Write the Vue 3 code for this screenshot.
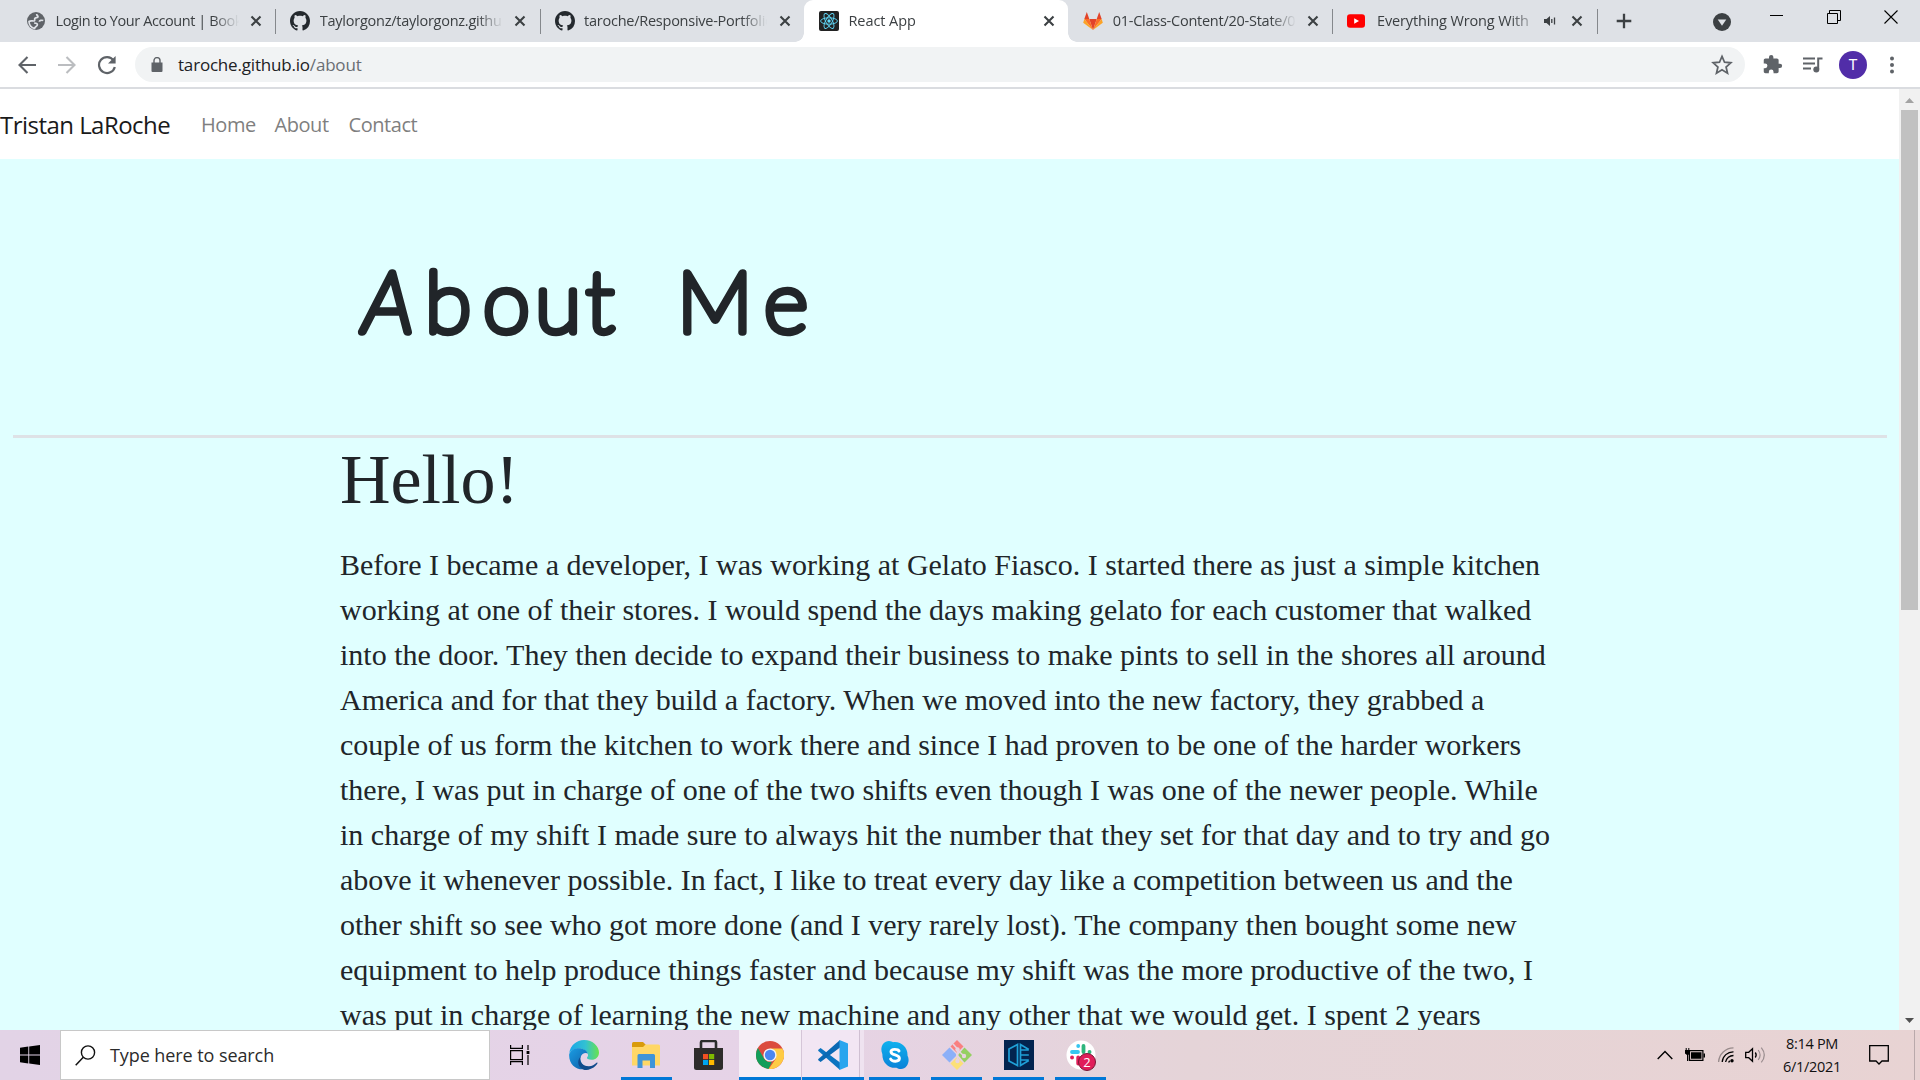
<script setup>
const tabs = [
  { icon: 'globe', title: 'Login to Your Account | Book', sp: '-0.42px' },
  { icon: 'github', title: 'Taylorgonz/taylorgonz.github', sp: '-0.25px' },
  { icon: 'github', title: 'taroche/Responsive-Portfolio', sp: '-0.25px' },
  { icon: 'react', title: 'React App', active: true, sp: '-0.05px' },
  { icon: 'gitlab', title: '01-Class-Content/20-State/0', sp: '-0.25px' },
  { icon: 'youtube', title: 'Everything Wrong With', sound: true, sp: '-0.13px' },
]
const lines = [
  'Before I became a developer, I was working at Gelato Fiasco. I started there as just a simple kitchen',
  'working at one of their stores. I would spend the days making gelato for each customer that walked',
  'into the door. They then decide to expand their business to make pints to sell in the shores all around',
  'America and for that they build a factory. When we moved into the new factory, they grabbed a',
  'couple of us form the kitchen to work there and since I had proven to be one of the harder workers',
  'there, I was put in charge of one of the two shifts even though I was one of the newer people. While',
  'in charge of my shift I made sure to always hit the number that they set for that day and to try and go',
  'above it whenever possible. In fact, I like to treat every day like a competition between us and the',
  'other shift so see who got more done (and I very rarely lost). The company then bought some new',
  'equipment to help produce things faster and because my shift was the more productive of the two, I',
  'was put in charge of learning the new machine and any other that we would get. I spent 2 years',
]
</script>

<template>
  <div class="screen">
    <header class="tabstrip">
      <div v-for="(t, i) in tabs" :key="i" class="tab" :class="{ active: t.active, sep: !t.active && i !== 2 }">
        <svg v-if="t.icon === 'globe'" class="fav" viewBox="0 0 20 20"><circle cx="10" cy="10" r="9" fill="#5f6368" /><path d="M10.700 3c-.2 1.500 1.300 1.600 1.300 2.700 0 1.300-2.500.6-3.200 1.800-.5 1 .4 1.500-.4 2.300C7.500 10.600 5 9 3 10.500c0 4 3 6.600 5.600 6.900.2-1.900 2.800-1.900 2.800-3.700 0-1.700-2.900-1.600-3.200-1.600M17.300 9.500c-1.600-.6-3.900 0-4 1.300" fill="none" stroke="#dee1e6" stroke-width="1.700" /></svg>
        <svg v-else-if="t.icon === 'github'" class="fav" viewBox="0 0 16 16"><path fill="#24292e" d="M8 0C3.580 0 0 3.580 0 8c0 3.540 2.290 6.530 5.470 7.590.4.070.55-.17.55-.38 0-.19-.01-.82-.01-1.490-2.010.37-2.530-.49-2.690-.94-.09-.23-.48-.94-.82-1.130-.28-.15-.68-.52-.01-.53.63-.01 1.080.58 1.230.82.72 1.210 1.870.87 2.330.66.070-.52.28-.87.51-1.070-1.780-.2-3.640-.89-3.640-3.950 0-.87.31-1.590.82-2.150-.08-.2-.36-1.020.08-2.120 0 0 .67-.21 2.200.82.64-.18 1.320-.27 2-.27s1.360.09 2 .27c1.530-1.040 2.200-.82 2.200-.82.44 1.100.16 1.920.08 2.120.51.56.82 1.270.82 2.150 0 3.070-1.870 3.750-3.650 3.950.29.25.54.73.54 1.480 0 1.070-.01 1.930-.01 2.200 0 .21.15.46.55.38A8.010 8.010 0 0 0 16 8c0-4.420-3.580-8-8-8z" /></svg>
        <svg v-else-if="t.icon === 'react'" class="fav" viewBox="0 0 20 20"><rect width="20" height="20" rx="2" fill="#222" /><g fill="none" stroke="#61dafb" stroke-width=".9"><ellipse cx="10" cy="10" rx="8.400" ry="3.200" /><ellipse cx="10" cy="10" rx="8.400" ry="3.200" transform="rotate(60 10 10)" /><ellipse cx="10" cy="10" rx="8.400" ry="3.200" transform="rotate(120 10 10)" /></g><circle cx="10" cy="10" r="1.700" fill="#61dafb" /></svg>
        <svg v-else-if="t.icon === 'gitlab'" class="fav" viewBox="0 0 20 20"><path fill="#e24329" d="M10 19 6.300 8h7.400zM3.800 1 1.300 8h5zM16.200 1l2.500 7h-5z" /><path fill="#fc6d26" d="M10 19 1.300 8h5zM10 19l8.700-11h-5z" /><path fill="#fca326" d="M10 19 .2 11.700 1.300 8zM10 19l9.800-7.300L18.700 8z" /></svg>
        <svg v-else class="fav" viewBox="0 0 20 20"><rect x="0" y="3.300" width="18" height="13.400" rx="3" fill="#f00" /><path d="M7.200 7.200v5.600L12 10z" fill="#fff" /></svg>
        <span class="title" :class="{ short: t.sound }" :style="{ letterSpacing: t.sp }">{{ t.title }}</span>
        <svg v-if="t.sound" class="snd" viewBox="0 0 14 12"><path d="M1 4v4h2.500L7 11V1L3.500 4z" fill="#3c4043" /><path d="M8.800 4v4M11.500 2.500v7" stroke="#3c4043" stroke-width="1.300" /></svg>
        <svg class="x" viewBox="0 0 12 12"><path d="m1.500 1.500 9 9m0-9-9 9" stroke="#3c4043" stroke-width="2.100" /></svg>
      </div>
      <svg class="plus" viewBox="0 0 16 16"><path d="M8 .7v14.600M.7 8h14.600" stroke="#3c4043" stroke-width="2.300" /></svg>
      <div class="winbtns">
        <svg class="down" viewBox="0 0 18 18"><circle cx="9" cy="9" r="9" fill="#3c4043" /><path d="M4.700 6.500h8.600L9 12.800z" fill="#dee1e6" /></svg>
        <svg class="wb" viewBox="0 0 14 14"><path d="M0 5.500h13" stroke="#000" /></svg>
        <svg class="wb" viewBox="0 0 14 14"><path d="M.5 3.500h10v10H.5zM2.500 3V.5h11v10H11" fill="none" stroke="#000" /></svg>
        <svg class="wb" viewBox="0 0 14 14"><path d="m.5.5 13 13m0-13-13 13" stroke="#000" stroke-width="1.100" /></svg>
      </div>
    </header>

    <div class="toolbar">
      <svg class="nav" viewBox="0 0 20 20"><path d="M19 10H3M10.500 2 2.500 10l8 8" fill="none" stroke="#5f6368" stroke-width="2.100" /></svg>
      <svg class="nav" viewBox="0 0 20 20"><path d="M1 10h16M9.500 2l8 8-8 8" fill="none" stroke="#bbbdc0" stroke-width="2.100" /></svg>
      <svg class="nav" viewBox="0 0 20 20"><path d="M16.500 5.300A8 8 0 1 0 17.800 12" fill="none" stroke="#5f6368" stroke-width="2.200" /><path d="M18.600 1v7.600H11z" fill="#5f6368" /></svg>
      <div class="omni">
        <svg class="lock" viewBox="0 0 12 15"><path d="M.5 5.500h11V14a1 1 0 0 1-1 1h-9a1 1 0 0 1-1-1z" fill="#5f6368" /><path d="M3 6V3.600a3 3 0 0 1 6 0V6" fill="none" stroke="#5f6368" stroke-width="1.400" /></svg>
        <span class="url">taroche.github.io<i>/about</i></span>
        <svg class="star" viewBox="0 0 20 20"><path d="m10 2.200 2.300 5.300 5.700.5-4.300 3.800 1.300 5.600-5-3-5 3 1.300-5.600L2 8l5.700-.5z" fill="none" stroke="#5f6368" stroke-width="1.600" /></svg>
      </div>
      <svg class="ext" viewBox="0 0 24 24"><path fill="#5f6368" d="M20.500 11H19V7c0-1.100-.9-2-2-2h-4V3.500a2.500 2.500 0 0 0-5 0V5H4c-1.100 0-2 .9-2 2v3.800h1.500a2.700 2.700 0 0 1 0 5.400H2V20c0 1.100.9 2 2 2h3.800v-1.500a2.700 2.700 0 0 1 5.400 0V22H17c1.100 0 2-.9 2-2v-4h1.500a2.500 2.500 0 0 0 0-5z" /></svg>
      <svg class="media" viewBox="0 0 20 16"><path d="M0 1.500h12M0 6.500h12M0 11.500h8" stroke="#5f6368" stroke-width="1.900" /><path d="M19.500 1.500h-4.300V12" fill="none" stroke="#5f6368" stroke-width="2" /><circle cx="13.300" cy="12.400" r="3" fill="#5f6368" /></svg>
      <span class="avatar">T</span>
      <svg class="dots" viewBox="0 0 4 18"><circle cx="2" cy="2.500" r="2" /><circle cx="2" cy="9" r="2" /><circle cx="2" cy="15.500" r="2" /></svg>
    </div>

    <div class="viewport">
      <main class="page">
        <nav class="navbar">
          <a class="brand">Tristan LaRoche</a>
          <a class="l1">Home</a>
          <a class="l2">About</a>
          <a class="l3">Contact</a>
        </nav>
        <section class="hero">
          <svg class="heading" viewBox="340 230 500 140" role="heading">
            <text y="332" x="363 425 483 535 586 640 677 764"><tspan font-style="italic">A</tspan>bout Me</text>
          </svg>
        </section>
        <hr />
        <article>
          <h2>Hello!</h2>
          <p><template v-for="(l, i) in lines" :key="i">{{ l }}<br /></template></p>
        </article>
      </main>
      <aside class="scroll">
        <svg viewBox="0 0 21 21"><path d="m6 14 4.500-5 4.500 5z" fill="#a3a3a3" /></svg>
        <div class="thumb"></div>
        <svg class="bot" viewBox="0 0 21 21"><path d="m6 9 4.500 5L15 9z" fill="#505050" /></svg>
      </aside>
    </div>

    <footer class="taskbar">
      <div class="start"><svg width="20" height="20" viewBox="0 0 20 20"><path d="M0 2.800 8.300 1.600v7.900H0zM9.200 1.500 20 0v9.500H9.200zM0 10.400h8.300v8L0 17.200zM9.200 10.400H20V20L9.200 18.500z" /></svg></div>
      <div class="search">
        <svg width="21" height="21" viewBox="0 0 21 21"><circle cx="13" cy="7.500" r="6.600" fill="none" stroke="#111" stroke-width="1.400" /><path d="m8.300 12.300-7.600 8" stroke="#111" stroke-width="1.500" /></svg>
        <span>Type here to search</span>
      </div>
      <div class="cell tv"><svg width="20" height="20" viewBox="0 0 20 20"><path d="M.6 0v3.400h11.800V0M.6 5.600h11.800v9H.6zM.6 20v-3.400h11.800V20M18 0v5M18 10v10" fill="none" stroke="#000" stroke-width="1.200" /><path d="M16.600 6h2.800v3h-2.800z" /></svg></div>
      <div class="cell"><svg width="30" height="30" viewBox="0 0 30 30"><defs><linearGradient id="eg" x1="0" x2="1"><stop offset="0" stop-color="#1aa6e8" /><stop offset=".55" stop-color="#33c1d2" /><stop offset="1" stop-color="#69e34c" /></linearGradient><linearGradient id="eb" x1="0" y1="0" x2="1" y2="1"><stop offset="0" stop-color="#1b9de2" /><stop offset="1" stop-color="#0c59a4" /></linearGradient></defs><path fill="url(#eg)" d="M.3 13C1.300 5.500 7.500 0 15 0c9 0 15 6.500 15 12.500 0 4.500-3.300 7.300-7.300 7.300-3.500 0-5-1.200-4.700-2 .4-1 1.200-1.300 1-3C18.500 11 14.500 8.500 10 8.500c-4 0-7.300 1.500-9.700 4.500z" /><path fill="url(#eb)" d="M.2 14C1.800 10.400 5.400 8.300 9.500 8.300c5 0 8.500 2.500 9.300 5.200-2-1.300-6.300-.5-7.300 4-.9 5 3.500 10.500 10 9.500C12 33-.8 27 .2 14z" /><path fill="#114a8b" d="M11.600 16.500c-2 5 2.400 10 8.400 9.700 3-.2 5.500-1.600 7.600-3.500.6-.4 1.100.1.800.7C25.800 27.500 21 30 15.500 30 9.500 28 7 21.500 11.600 16.500z" /></svg></div>
      <div class="cell run"><svg width="28" height="26" viewBox="0 0 28 26"><path fill="#d99b0a" d="M0 1.500Q0 0 1.500 0h9.500l2.500 2.500V6H0z" /><path fill="#ffd766" d="M0 5h11l2.500-2.500H26.500Q28 2.500 28 4v19.500H0z" /><path fill="#3f94d8" d="M5.500 13.500Q5.500 12 7 12h14.500Q23 12 23 13.500V26h-5v-7.500h-7.500V26h-5z" /></svg></div>
      <div class="cell"><svg width="29" height="30" viewBox="0 0 29 30"><path d="M7 9V2.500Q7 1 8.500 1h12Q22 1 22 2.500V9" fill="none" stroke="#2c2c2c" stroke-width="2.600" /><path d="M0 8h29v19.500Q29 30 26.500 30h-24Q0 30 0 27.500z" fill="#2e2c2b" /><path fill="#f25022" d="M9 14h5.200v5.200H9z" /><path fill="#7fba00" d="M15 14h5.200v5.200H15z" /><path fill="#00a4ef" d="M9 20h5.200v5H9z" /><path fill="#ffb900" d="M15 20h5.200v5H15z" /></svg></div>
      <div class="cell run chrome"><svg width="28" height="28" viewBox="0 0 28 28"><circle cx="14" cy="14" r="14" fill="#db4b3e" /><path fill="#129e5a" d="M1.900 7 8 17.500A7 7 0 0 0 16 20.500L12.500 28A14 14 0 0 1 1.900 7z" /><path fill="#fecb44" d="M14 7.500h12.400A14 14 0 0 1 12.700 28L20 17.500z" /><circle cx="14" cy="14" r="6.600" fill="#f3f3f3" /><circle cx="14" cy="14" r="5.200" fill="#4a86f0" /></svg></div>
      <div class="cell run code"><svg width="30" height="30" viewBox="0 0 30 30"><path fill="#0b74c0" d="M2.600 8 22 22.500V30L.4 11q-.6-.8 0-1.300z" /><path fill="#0a69b4" d="M2.600 22 22 7.500V0L.4 19q-.6.800 0 1.300z" /><path fill="#28a5ee" d="M21.500 0 30 3.500v23L21.500 30z" /></svg></div>
      <div class="cell run sky"><svg width="28" height="28" viewBox="0 0 28 28"><defs><linearGradient id="sk" x2="0" y2="1"><stop offset="0" stop-color="#0fb1ee" /><stop offset="1" stop-color="#0a82d8" /></linearGradient></defs><path fill="url(#sk)" d="M8 0c2 0 3 .8 4 1.200C20 0 27 6.500 26.500 14.500 29.500 20 26 28 20 28c-2 0-3.300-.4-4.500-1.200C7 27.500 1 21 1.400 13.200-1.500 7 2 0 8 0z" /><path d="M18 10C17 8 10.200 7.400 10 10.700c0 4 8.400 2.500 8.400 6.600 0 4-7.600 3.500-8.800.7" fill="none" stroke="#fff" stroke-width="2.900" stroke-linecap="round" /></svg></div>
      <div class="cell run"><svg width="30" height="30" viewBox="0 0 30 30"><path fill="#f98080" d="m15 0 6.500 6.500L15 13 8.500 6.500z" /><path fill="#8cb0f8" d="M7.500 7.500 14 14v2l-6.500 6.500L0 15z" /><path fill="#95cf62" d="M22.500 7.500 30 15l-7.500 7.500L16 15z" /><path fill="#fce077" d="m15 17 6.500 6.500L15 30l-6.500-6.500z" /><path d="m11 4 4.500 5v13M15.500 10l6.500 6" stroke="#e7d3e0" stroke-width="1.600" fill="none" /><g fill="#e7d3e0"><circle cx="15.500" cy="9.500" r="2.200" /><circle cx="22" cy="16" r="2.200" /><circle cx="15.500" cy="21" r="2.200" /></g></svg></div>
      <div class="cell run"><svg width="30" height="30" viewBox="0 0 30 30"><path fill="#03244f" d="M0 0h30v30H0z" /><path d="M13.500 4.500 5 9v12l8.500 4.500zM24.800 9.500 16.500 4.500v21l8.300-5M16.500 10h8.300M16.500 15h8.300M16.500 20h8.300" fill="none" stroke="#1fa0d8" stroke-width="1.700" /></svg></div>
      <div class="cell run slack"><svg width="30" height="30" viewBox="0 0 30 30"><circle cx="15" cy="15" r="14.500" fill="#fff" /><g stroke-width="3.800" stroke-linecap="round"><path d="M6 12h6M12.200 6v.1" stroke="#36c5f0" /><path d="M17.500 6v6M23.500 12h.1" stroke="#2eb67d" /><path d="M12.200 17.500v6M6 17.500h.1" stroke="#e01e5a" /><path d="M17.500 17.500h6" stroke="#ecb22e" /></g></svg><b>2</b></div>
      <div class="tray">
        <svg class="chev" viewBox="0 0 16 10"><path d="m.7 9 7.300-7.500L15.300 9" fill="none" stroke="#000" stroke-width="1.400" /></svg>
        <svg class="bat" viewBox="0 0 20 14"><path d="M4.500 5V2.600h13.400v9.800H4.500z" fill="none" stroke="#000" stroke-width="1.200" /><path d="M6 4.200h10.500v6.600H6zM18.500 5.500H20v4h-1.500zM0 2h5v3.500L3.300 7v6H2V7L0 5.500zM.7 0h1v2h-1zM3.300 0h1v2h-1z" /></svg>
        <svg class="wifi" viewBox="0 0 16 16"><g fill="none" stroke="#000" stroke-width="1.300"><path d="M.6 15A15 15 0 0 1 15.500.8" opacity=".35" /><path d="M4.200 15A11 11 0 0 1 15.500 4.800M7.600 15a8 8 0 0 1 7.900-6.500" /></g><path d="M10.700 15.500a5 5 0 0 1 1-1.800" stroke="#000" stroke-width="1.300" /><circle cx="14" cy="13.800" r="1.700" /></svg>
        <svg class="vol" viewBox="0 0 21 16"><path d="M.7 5.300h3L7.500 1.700v12.600L3.700 10.700h-3z" fill="none" stroke="#000" stroke-width="1.300" /><path d="M10.300 5.500q1.800 2.500 0 5" fill="none" stroke="#000" stroke-width="1.300" /><path d="M13.200 3q3.800 5 0 10M16.300.6q6 7.400 0 14.800" fill="none" stroke="#9a8d8f" stroke-width="1.200" /></svg>
        <div class="clock"><span>8:14 PM</span><span>6/1/2021</span></div>
        <svg class="note" viewBox="0 0 20 20"><path d="M.7.7h18.600v15.300h-6.300L10 19l-3-3H.7z" fill="none" stroke="#000" stroke-width="1.300" /></svg>
        <i class="desk"></i>
      </div>
    </footer>
  </div>
</template>

<style>
body { overflow: hidden; }
</style>
<style scoped>
* { box-sizing: border-box; }
svg { display: block; flex: none; }
.screen { width: 1920px; height: 1080px; display: flex; flex-direction: column; overflow: hidden; background: #fff; font-family: "Open Sans", "Noto Sans", sans-serif; }
.tabstrip { height: 42px; flex: none; display: flex; background: #dee1e6; padding-left: 11px; align-items: center; }
.tab { width: 264.300px; height: 42px; flex: none; display: flex; align-items: center; padding-left: 15px; position: relative; }
.tab.sep::after { content: ""; position: absolute; right: -1px; top: 9px; width: 1px; height: 25px; background: #85888c; }
.tab.active { background: #fff; border-radius: 9px 9px 0 0; }
.tab.active::before, .tab.active::after { content: ""; position: absolute; bottom: 0; width: 9px; height: 9px; }
.tab.active::before { left: -9px; background: radial-gradient(circle at 0 0, transparent 8.500px, #fff 9px); }
.tab.active::after { right: -9px; background: radial-gradient(circle at 100% 0, transparent 8.500px, #fff 9px); }
.fav { width: 20px; height: 20px; }
.title { margin-left: 9.500px; width: 185px; font-size: 14.500px; line-height: 20px; color: #3c4043; white-space: nowrap; overflow: hidden; -webkit-mask-image: linear-gradient(90deg, #000 85%, transparent 99%); mask-image: linear-gradient(90deg, #000 85%, transparent 99%); }
.title.short { width: 156px; -webkit-mask-image: linear-gradient(90deg, #000 85%, transparent 105%); mask-image: linear-gradient(90deg, #000 85%, transparent 105%); }
.snd { width: 14px; height: 12px; margin: 0 0 0 10px; }
.tab .x { width: 12px; height: 12px; margin-left: 9.500px; }
.title.short ~ .x { margin-left: 14px; }
.plus { width: 16px; height: 16px; margin-left: 19px; }
.winbtns { margin-left: 81px; display: flex; }
.down { width: 18px; height: 18px; margin-top: 2px; }
.wb { width: 14px; height: 14px; margin: -1px 0 0 43px; }
.down + .wb { margin-left: 39px; }
.toolbar { height: 47px; flex: none; display: flex; align-items: center; padding: 0 0 0 17px; border-bottom: 2px solid #dadce0; }
.nav { width: 20px; height: 20px; margin-right: 20px; }
.omni { width: 1610px; height: 35px; border-radius: 18px; background: #f1f3f4; display: flex; align-items: center; padding-left: 16px; margin-left: -2px; }
.lock { width: 12px; height: 15px; }
.url { margin-left: 15px; font-size: 17px; color: #202124; letter-spacing: -0.190px; line-height: 24px; width: 1533px; padding-top: 1px; }
.url i { font-style: normal; color: #6a6e73; }
.star { width: 22px; height: 22px; }
.ext { width: 21px; height: 21px; margin-left: 17px; }
.media { width: 20px; height: 16px; margin-left: 20px; }
.avatar { width: 28px; height: 28px; border-radius: 50%; background: #512da8; color: #fff; font: 15px/28px Roboto, sans-serif; text-align: center; margin-left: 16px; }
.dots { width: 4px; height: 18px; margin-left: 23px; fill: #5f6368; }
.viewport { height: 941px; display: flex; flex: none; overflow: hidden; }
.page { width: 1899px; background: #e0ffff; overflow: hidden; }
.navbar { height: 70px; background: #fff; display: flex; align-items: center; padding-top: 2px; font-size: 20px; letter-spacing: -0.450px; color: #7f7f7f; }
.navbar a { line-height: 30px; white-space: nowrap; }
.navbar .brand { font-size: 24px; color: #1a1a1a; width: 201px; letter-spacing: -0.530px; }
.l1 { width: 73.500px; } .l2 { width: 74px; }
.hero { height: 276px; padding: 71px 0 0 340px; }
.heading { width: 500px; height: 140px; }
.heading text { font-family: Lato, sans-serif; font-weight: 100; font-size: 85px; fill: #212529; stroke: #212529; stroke-width: 7.500px; stroke-linejoin: round; }
hr { margin: 0 12px 0 13px; border: 0; height: 3px; background: #dee2e6; }
article { padding-left: 340px; color: #212529; font-family: "Liberation Serif", serif; }
h2 { margin: 0; font-size: 70px; line-height: 84px; font-weight: 400; }
p { margin: 20px 0 0; font-size: 30px; line-height: 45px; white-space: nowrap; }
.scroll { width: 21px; background: #f1f1f1; display: flex; flex-direction: column; }
.scroll svg { width: 21px; height: 21px; }
.thumb { width: 17px; height: 500px; margin-left: 2px; background: #c1c1c1; }
.scroll .bot { margin-top: auto; }
.taskbar { height: 50px; flex: none; display: flex; background: linear-gradient(90deg, #e2d3e6 0%, #e6d3e7 40%, #e5d4d8 62%, #e8d3d3 100%); }
.start { width: 60px; flex: none; padding: 15px 0 0 20px; }
.search { width: 430px; flex: none; background: #fff; border: 1px solid #c8c8c8; display: flex; align-items: center; padding-left: 14px; font-size: 18px; color: #2b2b2b; }
.search span { margin-left: 14px; letter-spacing: -0.080px; }
.cell { width: 62.100px; height: 50px; flex: none; display: flex; align-items: center; justify-content: center; position: relative; }
.cell.tv { margin: 0 2px 0 -1px; }
.cell.run::after { content: ""; position: absolute; left: 5.500px; right: 5.500px; bottom: 0; height: 3px; background: #0078d7; }
.cell.chrome { background: #f5eef6; }
.cell.code { background: #f2e6f3; border-left: 1px solid #d5c6d8; }
.cell.code::before { content: ""; position: absolute; right: 0; top: 0; width: 4px; height: 50px; background: #efe3f0; border-left: 1px solid #cfc0d2; }
.cell.chrome::after { left: 0; right: 0; } .cell.code::after { left: 0; right: 0; }
.cell b { position: absolute; left: 28px; top: 23px; width: 18px; height: 18px; border-radius: 50%; background: #e01e5a; border: 1px solid #7a1734; color: #fff; font: 13px/16px "Open Sans", sans-serif; text-align: center; }
.tray { margin-left: auto; display: flex; align-items: center; height: 50px; }
.chev { width: 16px; height: 10px; margin-right: 12px; }
.bat { width: 20px; height: 14px; margin-right: 13px; }
.wifi { width: 16px; height: 16px; margin-right: 11px; }
.vol { width: 21px; height: 16px; margin-right: 11px; }
.clock { width: 70px; display: flex; flex-direction: column; text-align: center; font-size: 14.500px; line-height: 23px; letter-spacing: -0.300px; color: #111; }
.note { width: 20px; height: 20px; margin-left: 22px; }
.desk { width: 1px; height: 50px; background: #b9a9ab; margin: 0 5px 0 25px; }
</style>
